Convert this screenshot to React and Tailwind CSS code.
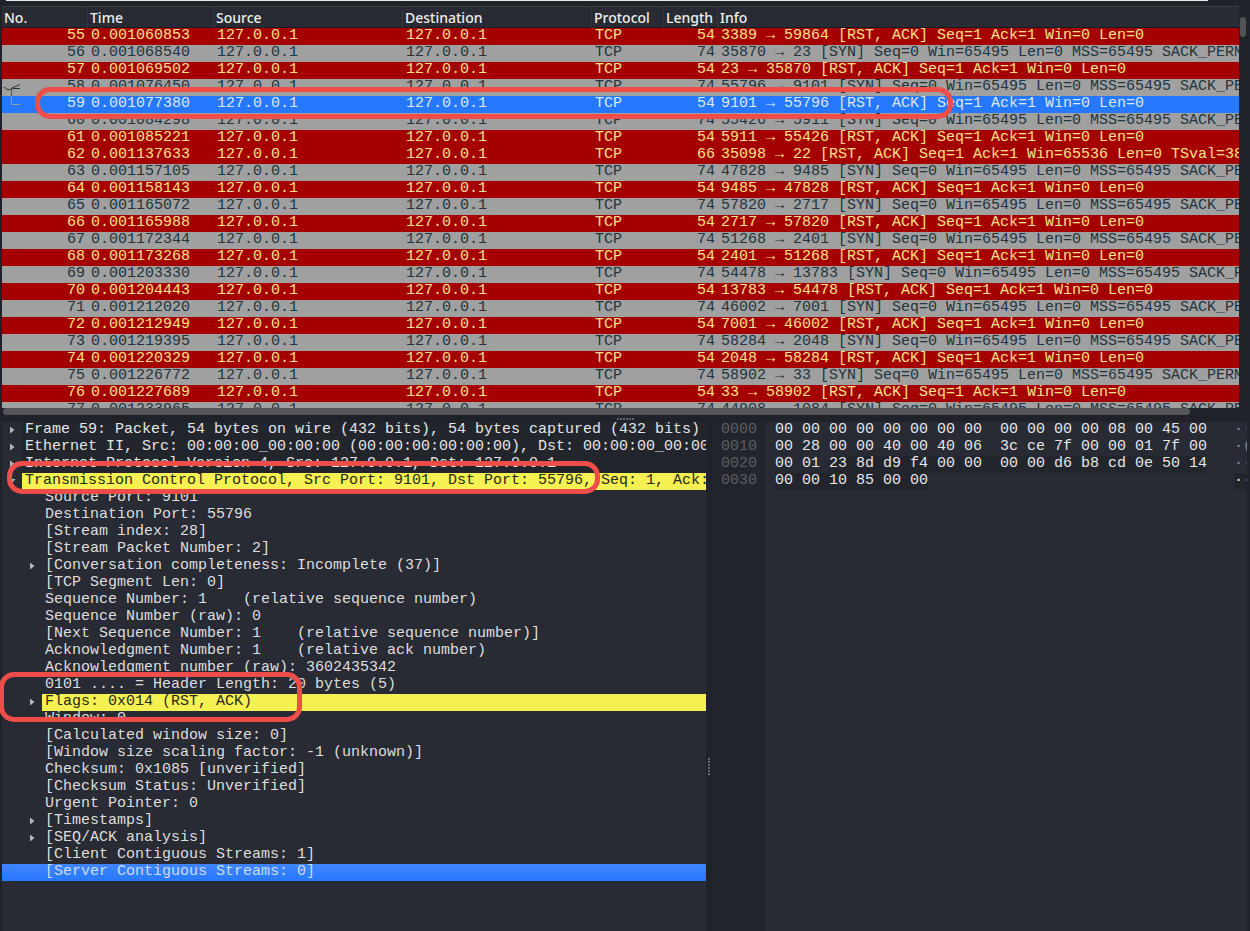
import React from 'react';

const packets = [
  [55, '0.001060853', 54, '3389 → 59864 [RST, ACK] Seq=1 Ack=1 Win=0 Len=0'],
  [56, '0.001068540', 74, '35870 → 23 [SYN] Seq=0 Win=65495 Len=0 MSS=65495 SACK_PERM'],
  [57, '0.001069502', 54, '23 → 35870 [RST, ACK] Seq=1 Ack=1 Win=0 Len=0'],
  [58, '0.001076450', 74, '55796 → 9101 [SYN] Seq=0 Win=65495 Len=0 MSS=65495 SACK_PERM'],
  [59, '0.001077380', 54, '9101 → 55796 [RST, ACK] Seq=1 Ack=1 Win=0 Len=0'],
  [60, '0.001084298', 74, '55426 → 5911 [SYN] Seq=0 Win=65495 Len=0 MSS=65495 SACK_PERM'],
  [61, '0.001085221', 54, '5911 → 55426 [RST, ACK] Seq=1 Ack=1 Win=0 Len=0'],
  [62, '0.001137633', 66, '35098 → 22 [RST, ACK] Seq=1 Ack=1 Win=65536 Len=0 TSval=38'],
  [63, '0.001157105', 74, '47828 → 9485 [SYN] Seq=0 Win=65495 Len=0 MSS=65495 SACK_PERM'],
  [64, '0.001158143', 54, '9485 → 47828 [RST, ACK] Seq=1 Ack=1 Win=0 Len=0'],
  [65, '0.001165072', 74, '57820 → 2717 [SYN] Seq=0 Win=65495 Len=0 MSS=65495 SACK_PERM'],
  [66, '0.001165988', 54, '2717 → 57820 [RST, ACK] Seq=1 Ack=1 Win=0 Len=0'],
  [67, '0.001172344', 74, '51268 → 2401 [SYN] Seq=0 Win=65495 Len=0 MSS=65495 SACK_PERM'],
  [68, '0.001173268', 54, '2401 → 51268 [RST, ACK] Seq=1 Ack=1 Win=0 Len=0'],
  [69, '0.001203330', 74, '54478 → 13783 [SYN] Seq=0 Win=65495 Len=0 MSS=65495 SACK_PERM'],
  [70, '0.001204443', 54, '13783 → 54478 [RST, ACK] Seq=1 Ack=1 Win=0 Len=0'],
  [71, '0.001212020', 74, '46002 → 7001 [SYN] Seq=0 Win=65495 Len=0 MSS=65495 SACK_PERM'],
  [72, '0.001212949', 54, '7001 → 46002 [RST, ACK] Seq=1 Ack=1 Win=0 Len=0'],
  [73, '0.001219395', 74, '58284 → 2048 [SYN] Seq=0 Win=65495 Len=0 MSS=65495 SACK_PERM'],
  [74, '0.001220329', 54, '2048 → 58284 [RST, ACK] Seq=1 Ack=1 Win=0 Len=0'],
  [75, '0.001226772', 74, '58902 → 33 [SYN] Seq=0 Win=65495 Len=0 MSS=65495 SACK_PERM'],
  [76, '0.001227689', 54, '33 → 58902 [RST, ACK] Seq=1 Ack=1 Win=0 Len=0'],
  [77, '0.001233965', 74, '44908 → 1084 [SYN] Seq=0 Win=65495 Len=0 MSS=65495 SACK_PERM'],
];

const columns = ['No.', 'Time', 'Source', 'Destination', 'Protocol', 'Length', 'Info'];

const details = [
  { text: 'Frame 59: Packet, 54 bytes on wire (432 bits), 54 bytes captured (432 bits)', arrow: 'closed' },
  { text: 'Ethernet II, Src: 00:00:00_00:00:00 (00:00:00:00:00:00), Dst: 00:00:00_00:00', arrow: 'closed' },
  { text: 'Internet Protocol Version 4, Src: 127.0.0.1, Dst: 127.0.0.1', arrow: 'closed' },
  { text: 'Transmission Control Protocol, Src Port: 9101, Dst Port: 55796, Seq: 1, Ack:', arrow: 'open', marked: true },
  { text: 'Source Port: 9101', child: true },
  { text: 'Destination Port: 55796', child: true },
  { text: '[Stream index: 28]', child: true },
  { text: '[Stream Packet Number: 2]', child: true },
  { text: '[Conversation completeness: Incomplete (37)]', child: true, arrow: 'closed' },
  { text: '[TCP Segment Len: 0]', child: true },
  { text: 'Sequence Number: 1    (relative sequence number)', child: true },
  { text: 'Sequence Number (raw): 0', child: true },
  { text: '[Next Sequence Number: 1    (relative sequence number)]', child: true },
  { text: 'Acknowledgment Number: 1    (relative ack number)', child: true },
  { text: 'Acknowledgment number (raw): 3602435342', child: true },
  { text: '0101 .... = Header Length: 20 bytes (5)', child: true },
  { text: 'Flags: 0x014 (RST, ACK)', child: true, arrow: 'closed', marked: true },
  { text: 'Window: 0', child: true },
  { text: '[Calculated window size: 0]', child: true },
  { text: '[Window size scaling factor: -1 (unknown)]', child: true },
  { text: 'Checksum: 0x1085 [unverified]', child: true },
  { text: '[Checksum Status: Unverified]', child: true },
  { text: 'Urgent Pointer: 0', child: true },
  { text: '[Timestamps]', child: true, arrow: 'closed' },
  { text: '[SEQ/ACK analysis]', child: true, arrow: 'closed' },
  { text: '[Client Contiguous Streams: 1]', child: true },
  { text: '[Server Contiguous Streams: 0]', child: true, selected: true },
];

// The "field" part of each line belongs to the selected TCP header
const hexLines = [
  { offset: '0000', plain: '00 00 00 00 00 00 00 00  00 00 00 00 08 00 45 00', field: '', ascii: '··' },
  { offset: '0010', plain: '00 28 00 00 40 00 40 06  3c ce 7f 00 00 01 7f 00', field: '', ascii: '·(' },
  { offset: '0020', plain: '00 01 ', field: '23 8d d9 f4 00 00  00 00 d6 b8 cd 0e 50 14', ascii: '··' },
  { offset: '0030', plain: '', field: '00 00 10 85 00 00', ascii: '··' },
];

const rowColor = (no, length) => {
  if (no === 59) return 'bg-[#2678ff] text-[#dce8ff]';
  if (length === 74) return 'bg-[#a0a0a0] text-[#22343c]';
  return 'bg-[#a40000] text-[#fce08a]';
};

const ConversationMark = () => (
  <svg className="absolute left-[2px] top-0 z-10 w-5 h-8" viewBox="0 0 20 32" fill="none">
    <path d="M0 8 L3 10.5 Q6 12 8 9 L16 5.5 M7 9.5 H16" stroke="#22343c" strokeWidth="1" />
    <path d="M7.5 9 V17" stroke="#4a565c" strokeWidth="1" />
    <path d="M7.5 17 V25.5 H16" stroke="#8d99ae" strokeWidth="1" />
  </svg>
);

const PacketList = () => (
  <section className="grid grid-cols-[minmax(0,1fr)_8px] grid-rows-[minmax(0,1fr)_8px] min-h-0 pl-[2px] pr-[3px]">
    <div className="overflow-hidden bg-[#282a34]">
      <table className="w-full table-fixed border-collapse">
        <colgroup>
          <col className="w-[86px]" />
          <col className="w-[126px]" />
          <col className="w-[189px]" />
          <col className="w-[189px]" />
          <col className="w-[72px]" />
          <col className="w-[54px]" />
          <col />
        </colgroup>
        <thead>
          <tr className="h-[22px] bg-[#282b33] font-['Noto_Sans',sans-serif] text-[14px] leading-[20px] text-[#eeeeec] shadow-[inset_0_1px_#3c3e46,inset_0_-1px_#191b20]">
            {columns.map((name) => (
              <th key={name} scope="col" className="p-0 pt-[2px] pl-[2px] text-left font-medium whitespace-nowrap shadow-[inset_-1px_0_#34363e] last:shadow-none">
                {name}
              </th>
            ))}
          </tr>
        </thead>
        <tbody>
          {packets.map(([no, time, length, info]) => (
            <tr key={no} className={`h-[17px] align-top whitespace-pre ${rowColor(no, length)}`}>
              <td className="relative p-0 pr-[3px] text-right">
                {no === 58 && <ConversationMark />}
                {no}
              </td>
              <td className="p-0 pl-[3px]">{time}</td>
              <td className="p-0 pl-[3px]">127.0.0.1</td>
              <td className="p-0 pl-[3px]">127.0.0.1</td>
              <td className="p-0 pl-[3px]">TCP</td>
              <td className="p-0 pr-[3px] text-right">{length}</td>
              <td className="p-0 pl-[3px] overflow-hidden">{info}</td>
            </tr>
          ))}
        </tbody>
      </table>
    </div>
    <div className="bg-[#1f2228] px-px pt-[11px]">
      <div className="h-5 rounded-full bg-[#505256]" />
    </div>
    <div className="bg-[#1f2228] pl-px pb-px">
      <div className="h-full w-[96%] rounded-full bg-[#55565a]" />
    </div>
    <div className="bg-[#1f2228]" />
  </section>
);

const Arrow = ({ state }) => (
  <svg className="w-2 h-2 text-[#b4b5b8]" viewBox="0 0 8 8" fill="currentColor">
    {state === 'open' ? <path d="M0.5 2 H7.5 L4 6 Z" /> : <path d="M2 0.5 L6.5 4 L2 7.5 Z" />}
  </svg>
);

const detailColor = ({ child, marked, selected }) => {
  if (marked) return 'bg-[#f6f152] text-[#272a16]';
  if (selected) return 'text-[#c8dcff]';
  if (child) return 'text-[#dedede]';
  return 'bg-[#22252c] text-[#e6e6e6]';
};

const PacketDetails = () => (
  <section className="overflow-hidden bg-[#282a34]">
    <ul>
      {details.map((item) => (
        <li
          key={item.text}
          className={`flex h-[17px] whitespace-pre ${item.selected ? 'bg-linear-to-b from-[#4085ff] to-[#2678ff]' : ''}`}
        >
          <span className={`flex shrink-0 items-center justify-end pb-px pr-[6px] ${item.child ? 'w-10' : 'w-5'}`}>
            {item.arrow && <Arrow state={item.arrow} />}
          </span>
          <span className={`min-w-0 flex-1 overflow-hidden pl-[3px] ${detailColor(item)}`}>{item.text}</span>
        </li>
      ))}
    </ul>
  </section>
);

const PacketBytes = () => (
  <section className="flex overflow-hidden bg-[#282a34] whitespace-pre text-[#e6e6e6]">
    <div className="w-[53px] shrink-0 bg-[#22252c] pl-[9px] text-[#5c5e62]">
      {hexLines.map((line) => (
        <div key={line.offset} className="h-[17px]">{line.offset}</div>
      ))}
    </div>
    <div className="w-[469px] shrink-0 pl-[10px]">
      {hexLines.map((line) => (
        <div key={line.offset} className="h-[17px]">
          {line.plain}
          <span className="inline-block h-[17px] bg-[#22252c] align-top">{line.field}</span>
        </div>
      ))}
    </div>
    <div className="text-[#8a8b90]">
      {hexLines.map((line) => (
        <div key={line.offset} className="h-[17px] last:bg-[#22252c] last:text-[#e6e6e6]">{line.ascii}</div>
      ))}
    </div>
  </section>
);

const Grip = ({ vertical }) => (
  <div className={`flex gap-px ${vertical ? 'flex-col' : ''}`}>
    {[0, 1, 2, 3, 4, 5].map((dot) => (
      <span key={dot} className="size-[2px] bg-[#66686c]" />
    ))}
  </div>
);

const App = () => {
  return (
    <main className="relative grid h-screen grid-rows-[6px_minmax(0,410fr)_6px_minmax(0,509fr)] overflow-hidden bg-[#1f2228] font-['Liberation_Mono',monospace] text-[15px] leading-[15px]">
      <div className="pl-[6px] pr-[42px]">
        <div className="h-px bg-[#e8e8e2]" />
      </div>

      <PacketList />

      <div className="flex items-center justify-center">
        <Grip />
      </div>

      <div className="grid min-h-0 grid-cols-[minmax(0,704fr)_6px_minmax(0,535fr)] pl-[2px] pr-[3px]">
        <PacketDetails />
        <div className="flex justify-center pt-[336px]">
          <Grip vertical />
        </div>
        <PacketBytes />
      </div>

      {/* Highlight boxes drawn over the capture */}
      <div className="absolute left-[35px] top-[87px] h-8 w-[918px] rounded-[15px] border-5 border-[#ee4d4a]" />
      <div className="absolute left-[7px] top-[461px] h-[33px] w-[593px] rounded-[15px] border-5 border-[#ee4d4a]" />
      <div className="absolute left-[-1px] top-[672px] h-[50px] w-[303px] rounded-[15px] border-5 border-[#ee4d4a]" />
    </main>
  );
};

export default App;
